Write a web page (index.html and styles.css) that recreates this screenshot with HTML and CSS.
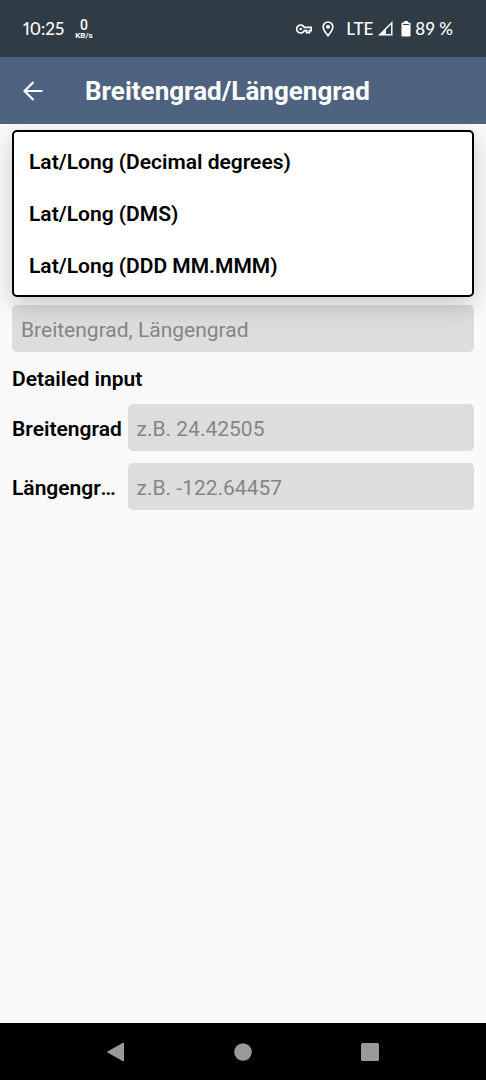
FILE: index.html
```html
<!DOCTYPE html>
<html lang="de">
<head>
<meta charset="utf-8">
<meta name="viewport" content="width=device-width, initial-scale=1">
<title>Breitengrad/Längengrad</title>
<link rel="stylesheet" href="styles.css">
</head>
<body>
<div class="status">
  <span class="clock">10:25</span>
  <span class="speed"><span class="speed-value">0</span><span class="speed-unit">KB/s</span></span>
  <span class="status-icons">
    <svg class="key" width="16" height="10" viewBox="0 0 16 10" fill="none" stroke="currentColor" stroke-width="1.7"><path d="M8.300 3.400A4 4 0 1 0 8.300 6.600H10.600V8.700H13.400V6.600H15.200V3.400Z"/><circle cx="4.700" cy="5" r="1.300" fill="currentColor" stroke="none"/></svg>
    <svg class="pin" width="12" height="16" viewBox="0 0 12 16"><path d="M6 1A4.800 4.800 0 0 0 1.200 5.800C1.200 9.200 6 14.700 6 14.700S10.800 9.200 10.800 5.800A4.800 4.800 0 0 0 6 1Z" fill="none" stroke="currentColor" stroke-width="1.700"/><circle cx="6" cy="5.800" r="2" fill="currentColor"/></svg>
    <span class="network">LTE</span>
    <svg class="signal" width="15" height="15" viewBox="0 0 15 15"><path d="M0 14.500 14.500 0V14.500Z M8 8.500V13H13V3.500Z" fill="currentColor" fill-rule="evenodd"/></svg>
    <svg class="battery" width="10" height="16" viewBox="0 0 10 16"><path d="M3 0H7V1.500H8.500Q9.500 1.500 9.500 2.500V14.500Q9.500 15.500 8.500 15.500H1.500Q.5 15.500 .5 14.500V2.500Q.5 1.500 1.500 1.500H3Z M2 3V4H8V3Z" fill="currentColor" fill-rule="evenodd"/></svg>
    <span>89 %</span>
  </span>
</div>
<header class="appbar">
  <button class="back" type="button" aria-label="Zurück">
    <svg width="20" height="20" viewBox="0 0 20 20" fill="none" stroke="currentColor" stroke-width="2.200"><path d="M19.500 10H2M10.500 1 1.500 10 10.500 19"/></svg>
  </button>
  <h1 class="title">Breitengrad/Längengrad</h1>
</header>
<main class="content">
  <div class="menu" role="listbox" aria-label="Format">
    <button class="option" type="button" role="option">Lat/Long (Decimal degrees)</button>
    <button class="option" type="button" role="option">Lat/Long (DMS)</button>
    <button class="option" type="button" role="option">Lat/Long (DDD MM.MMM)</button>
  </div>
  <input class="field" type="text" aria-label="Breitengrad, Längengrad" placeholder="Breitengrad, Längengrad">
  <h2 class="section">Detailed input</h2>
  <div class="rows">
    <div class="row">
      <label class="label" for="lat">Breitengrad</label>
      <input class="field" id="lat" type="text" placeholder="z.B. 24.42505">
    </div>
    <div class="row">
      <label class="label" for="lon">Längengrad</label>
      <input class="field" id="lon" type="text" placeholder="z.B. -122.64457">
    </div>
  </div>
</main>
<nav class="navbar">
  <button class="nav-button" type="button" aria-label="Zurück"><svg width="20" height="20" viewBox="0 0 20 20"><path d="M1.500 10 17.500 1V19Z" fill="currentColor" stroke="currentColor" stroke-linejoin="round"/></svg></button>
  <button class="nav-button" type="button" aria-label="Startseite"><svg width="20" height="20" viewBox="0 0 20 20"><circle cx="10" cy="10" r="8.800" fill="currentColor"/></svg></button>
  <button class="nav-button" type="button" aria-label="Übersicht"><svg width="20" height="20" viewBox="0 0 20 20"><rect x="1" y="1" width="18" height="18" rx="1.500" fill="currentColor"/></svg></button>
</nav>
</body>
</html>
```
FILE: styles.css
```css
* {
  box-sizing: border-box;
}

body {
  margin: 0;
  min-height: 100vh;
  display: flex;
  flex-direction: column;
  background: #fafafa;
  color: #000;
  font-family: Roboto, sans-serif;
}

button {
  border: 0;
  padding: 0;
  background: none;
  color: inherit;
  font: inherit;
}

svg {
  display: block;
  flex: none;
}

.status {
  display: flex;
  align-items: center;
  height: 57px;
  padding: 0 33px 0 23px;
  background: #303c45;
  color: #fff;
  font: 500 17px/20px Lato, sans-serif;
}

.clock {
  font-variant-numeric: proportional-nums;
}

.speed {
  display: flex;
  flex-direction: column;
  align-items: center;
  margin-left: 11px;
  font-family: Roboto, sans-serif;
}

.speed-value {
  font-size: 14px;
  line-height: 14px;
}

.speed-unit {
  font-size: 8px;
  font-weight: 700;
  line-height: 8px;
}

.status-icons {
  display: flex;
  align-items: center;
  margin-left: auto;
}

.pin {
  margin-left: 10px;
}

.network {
  margin-left: 12px;
}

.signal {
  margin-left: 5px;
}

.battery {
  margin: 0 4px 0 8px;
}

.appbar {
  display: flex;
  align-items: center;
  height: 67px;
  padding-left: 23px;
  background: #4e6380;
  color: #fff;
}

.title {
  margin: 0 0 0 42px;
  font-size: 26px;
  font-weight: 700;
  line-height: 32px;
}

.content {
  flex: 1;
  padding: 6px 12px;
}

.menu {
  position: relative;
  z-index: 1;
  display: flex;
  flex-direction: column;
  margin-bottom: 8px;
  padding: 4px 0 3px;
  border: 2px solid #000;
  border-radius: 5px;
  background: #fff;
  box-shadow: 0 8px 24px rgba(0, 0, 0, .2);
  clip-path: inset(-6px -12px -48px);
}

.option {
  height: 52px;
  padding: 0 15px;
  font-size: 21px;
  font-weight: 600;
  text-align: left;
}

.field {
  display: block;
  width: 100%;
  min-width: 0;
  height: 47px;
  padding: 2px 9px 0;
  border: 0;
  border-radius: 5px;
  background: #ddd;
  color: #000;
  font: 400 21px/28px Roboto, sans-serif;
}

.field::placeholder {
  color: #858585;
  opacity: 1;
}

.section {
  margin: 13px 0 11px;
  font-size: 21px;
  font-weight: 600;
  line-height: 28px;
}

.rows {
  display: grid;
  gap: 12px;
}

.row {
  display: grid;
  grid-template-columns: 1fr 3fr;
  align-items: center;
}

.label {
  overflow: hidden;
  padding: 2px 4px 0 0;
  font-size: 21px;
  font-weight: 600;
  line-height: 28px;
  text-overflow: ellipsis;
  white-space: nowrap;
}

.navbar {
  display: flex;
  justify-content: center;
  gap: 107px;
  height: 57px;
  background: #000;
  color: #999;
}

.nav-button {
  display: flex;
  align-items: center;
}
```
